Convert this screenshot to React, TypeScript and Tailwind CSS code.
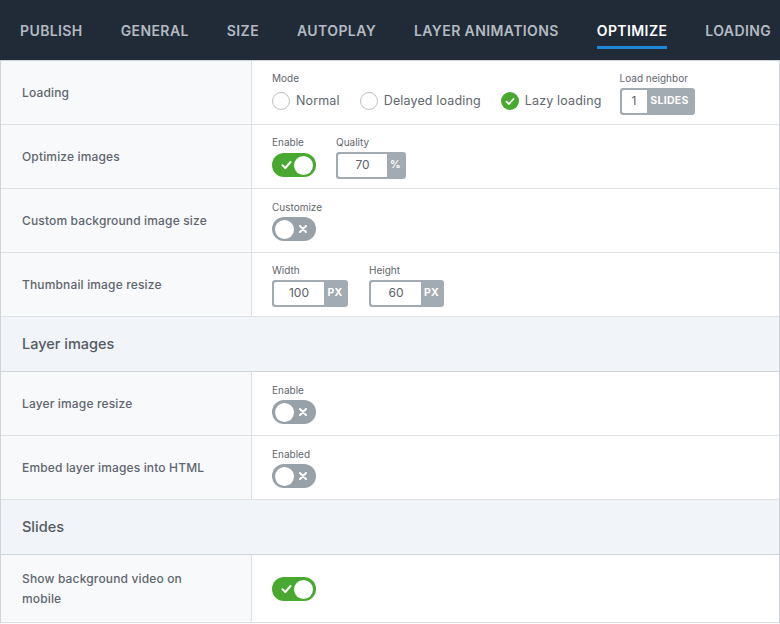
import React from "react";

const tabs = ["PUBLISH", "GENERAL", "SIZE", "AUTOPLAY", "LAYER ANIMATIONS", "OPTIMIZE", "LOADING"];

function Toggle({ on }: { on: boolean }) {
  return on ? (
    <div className="w-[44px] h-[24px] rounded-full bg-[#48a82f] flex items-center justify-end px-[3px] relative">
      <svg className="absolute left-[9px] top-[7px]" width="11" height="10" viewBox="0 0 11 10">
        <path d="M1.5 5.2 L4.3 8 L9.5 2" fill="none" stroke="#fff" strokeWidth="2" strokeLinecap="round" strokeLinejoin="round" />
      </svg>
      <div className="w-[19px] h-[19px] rounded-full bg-white" />
    </div>
  ) : (
    <div className="w-[44px] h-[24px] rounded-full bg-[#98a0a8] flex items-center px-[3px] relative">
      <div className="w-[19px] h-[19px] rounded-full bg-white" />
      <svg className="absolute right-[9px] top-[8px]" width="8" height="8" viewBox="0 0 8 8">
        <path d="M1 1 L7 7 M7 1 L1 7" stroke="#fff" strokeWidth="2" strokeLinecap="round" />
      </svg>
    </div>
  );
}

function NumInput({ value, unit, w, uw }: { value: string; unit: string; w: string; uw: string }) {
  return (
    <div className="flex h-[27px] rounded-[3px] bg-[#a3abb2] p-[2px]">
      <div className={`${w} bg-white rounded-l-[2px] flex items-center justify-center text-[12px] text-[#5a6169]`}>{value}</div>
      <div className={`${uw} flex items-center justify-center text-[10.5px] font-bold text-white tracking-[0.3px]`}>{unit}</div>
    </div>
  );
}

function Field({ label, children }: { label: string; children: React.ReactNode }) {
  return (
    <div className="flex flex-col">
      <div className="text-[10px] text-[#5f666e] leading-[12px] mb-[4px]">{label}</div>
      {children}
    </div>
  );
}

function Row({ label, h = "h-[64px]", children }: { label: React.ReactNode; h?: string; children: React.ReactNode }) {
  return (
    <div className={`flex ${h} border-b border-[#dde1e6]`}>
      <div className="w-[251px] shrink-0 bg-[#f8f9fb] border-r border-[#dde1e6] flex items-center pl-[21px] pr-4 text-[12px] font-medium text-[#5f666e] leading-[20px] tracking-[0.15px]">
        {label}
      </div>
      <div className="flex-1 bg-white flex items-center pl-[20px] pt-[1px]">{children}</div>
    </div>
  );
}

function Heading({ title }: { title: string }) {
  return (
    <div className="h-[55px] bg-[#f1f4f8] border-b border-[#cfd4da] flex items-center pl-[21px] text-[14.5px] font-medium text-[#545b63]">
      {title}
    </div>
  );
}

function Radio({ checked, label }: { checked?: boolean; label: string }) {
  return (
    <div className="flex items-center gap-[6px]">
      {checked ? (
        <div className="w-[18px] h-[18px] rounded-full bg-[#48a82f] flex items-center justify-center">
          <svg width="10" height="9" viewBox="0 0 10 9">
            <path d="M1.5 4.6 L4 7 L8.5 2" fill="none" stroke="#fff" strokeWidth="1.8" strokeLinecap="round" strokeLinejoin="round" />
          </svg>
        </div>
      ) : (
        <div className="w-[18px] h-[18px] rounded-full border-[1.5px] border-[#bcc2c8] bg-white" />
      )}
      <span className="text-[12.5px] text-[#5f666e] tracking-[0.15px]">{label}</span>
    </div>
  );
}

export default function App() {
  return (
    <div className="w-[780px] h-[624px] overflow-hidden bg-white" style={{ fontFamily: "Inter, 'Open Sans', sans-serif" }}>
      <div className="h-[60px] bg-[#212b38] flex items-stretch pl-[20px] gap-[38px]">
        {tabs.map((t) => (
          <div key={t} className="relative flex items-center">
            <span className={`text-[14px] font-semibold tracking-[0.4px] ${t === "OPTIMIZE" ? "text-white" : "text-[#b4bac2]"}`}>{t}</span>
            {t === "OPTIMIZE" && <div className="absolute left-0 right-0 top-[46px] h-[3px] bg-[#1e88d8]" />}
          </div>
        ))}
      </div>
      <div className="border-x border-t border-[#cfd4da]">
        <Row label="Loading">
          <div className="flex items-start">
            <Field label="Mode">
              <div className="flex items-center gap-[20px] h-[27px]">
                <Radio label="Normal" />
                <Radio label="Delayed loading" />
                <Radio checked label="Lazy loading" />
              </div>
            </Field>
            <div className="ml-[18px]">
              <Field label="Load neighbor">
                <NumInput value="1" unit="SLIDES" w="w-[25px]" uw="w-[46px]" />
              </Field>
            </div>
          </div>
        </Row>
        <Row label="Optimize images">
          <div className="flex gap-[20px]">
            <Field label="Enable">
              <div className="h-[27px] flex items-center"><Toggle on /></div>
            </Field>
            <Field label="Quality">
              <NumInput value="70" unit="%" w="w-[49px]" uw="w-[17px]" />
            </Field>
          </div>
        </Row>
        <Row label="Custom background image size">
          <Field label="Customize">
            <Toggle on={false} />
          </Field>
        </Row>
        <Row label="Thumbnail image resize">
          <div className="flex gap-[21px]">
            <Field label="Width">
              <NumInput value="100" unit="PX" w="w-[50px]" uw="w-[22px]" />
            </Field>
            <Field label="Height">
              <NumInput value="60" unit="PX" w="w-[50px]" uw="w-[21px]" />
            </Field>
          </div>
        </Row>
        <Heading title="Layer images" />
        <Row label="Layer image resize">
          <Field label="Enable">
            <Toggle on={false} />
          </Field>
        </Row>
        <Row label="Embed layer images into HTML">
          <Field label="Enabled">
            <Toggle on={false} />
          </Field>
        </Row>
        <Heading title="Slides" />
        <Row label={<span>Show background video on<br />mobile</span>} h="h-[68px]">
          <Toggle on />
        </Row>
      </div>
    </div>
  );
}
